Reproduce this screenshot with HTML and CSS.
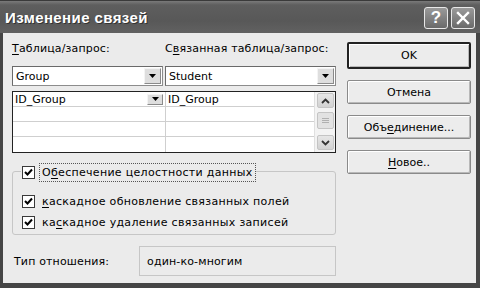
FILE: index.html
```html
<!DOCTYPE html>
<html lang="ru">
<head>
<meta charset="UTF-8">
<title>Изменение связей</title>
<link rel="stylesheet" href="styles.css">
</head>
<body>

<div class="window">
  <div class="titlebar">
    <span class="title">Изменение связей</span>
    <div class="caption-buttons">
      <span class="cap-btn">?</span>
      <span class="cap-btn">
        <svg width="14" height="14" viewBox="0 0 14 14"><path d="M2 2 L12 12 M12 2 L2 12" stroke="#fff" stroke-width="2.4" stroke-linecap="square"/></svg>
      </span>
    </div>
  </div>

  <div class="frame">
    <div class="dialog">
      <div class="main">
        <div class="labels">
          <span class="label-left"><u>Т</u>аблица/запрос:</span>
          <span>С<u>в</u>язанная таблица/запрос:</span>
        </div>

        <div class="combos">
          <div class="combo combo-left">
            <span class="combo-text">Group</span>
            <span class="drop-btn"><svg width="7" height="4" viewBox="0 0 7 4"><path d="M0 0 H7 L3.5 4 Z" fill="#000"/></svg></span>
          </div>
          <div class="combo combo-right">
            <span class="combo-text">Student</span>
            <span class="drop-btn"><svg width="7" height="4" viewBox="0 0 7 4"><path d="M0 0 H7 L3.5 4 Z" fill="#000"/></svg></span>
          </div>
        </div>

        <div class="grid">
          <div class="grid-rows">
            <div class="grid-row">
              <div class="cell cell-left">ID_Group
                <span class="cell-drop"><svg width="7" height="4" viewBox="0 0 7 4"><path d="M0 0 H7 L3.5 4 Z" fill="#000"/></svg></span>
              </div>
              <div class="cell">ID_Group</div>
            </div>
            <div class="grid-row"><div class="cell cell-left"></div><div class="cell"></div></div>
            <div class="grid-row"><div class="cell cell-left"></div><div class="cell"></div></div>
            <div class="grid-row"><div class="cell cell-left"></div><div class="cell"></div></div>
          </div>
          <div class="scrollbar">
            <span class="sb-btn">
              <svg width="9" height="6" viewBox="0 0 9 6"><path d="M1 5 L4.5 1.5 L8 5" fill="none" stroke="#333" stroke-width="1.8"/></svg>
            </span>
            <span class="sb-thumb">
              <svg width="7" height="6" viewBox="0 0 7 6"><path d="M0 0.5 H7 M0 2.5 H7 M0 4.5 H7" stroke="#b0b0b0" stroke-width="1"/></svg>
            </span>
            <span class="sb-btn sb-down">
              <svg width="9" height="6" viewBox="0 0 9 6"><path d="M1 1 L4.5 4.5 L8 1" fill="none" stroke="#333" stroke-width="1.8"/></svg>
            </span>
          </div>
        </div>

        <fieldset class="integrity">
          <legend class="integrity-legend">
            <span class="checkbox"><svg width="9" height="9" viewBox="0 0 9 9"><path d="M1 4 L3.5 6.5 L8 1.5" fill="none" stroke="#000" stroke-width="2"/></svg></span>
            <span class="focus-text">О<u>б</u>еспечение целостности данных</span>
          </legend>
          <div class="check-row">
            <span class="checkbox"><svg width="9" height="9" viewBox="0 0 9 9"><path d="M1 4 L3.5 6.5 L8 1.5" fill="none" stroke="#000" stroke-width="2"/></svg></span>
            <span><u>к</u>аскадное обновление связанных полей</span>
          </div>
          <div class="check-row">
            <span class="checkbox"><svg width="9" height="9" viewBox="0 0 9 9"><path d="M1 4 L3.5 6.5 L8 1.5" fill="none" stroke="#000" stroke-width="2"/></svg></span>
            <span>ка<u>с</u>кадное удаление связанных записей</span>
          </div>
        </fieldset>

        <div class="relation">
          <span class="relation-label">Тип отношения:</span>
          <span class="relation-value">один-ко-многим</span>
        </div>
      </div>

      <div class="actions">
        <button class="button button-default">OK</button>
        <button class="button">Отмена</button>
        <button class="button">Объ<u>е</u>динение...</button>
        <button class="button"><u>Н</u>овое..</button>
      </div>
    </div>
  </div>
</div>

</body>
</html>
```

FILE: styles.css
```css
body {
  margin: 0;
  font-family: "DejaVu Sans", Tahoma, sans-serif;
  font-size: 11px;
  color: #000;
  background: #444;
}

u {
  text-decoration-thickness: 1px;
  text-underline-offset: 2px;
}

.window {
  width: 480px;
  height: 288px;
  display: flex;
  flex-direction: column;
}

/* Заголовок окна */
.titlebar {
  height: 33px;
  flex-shrink: 0;
  display: flex;
  align-items: center;
  justify-content: space-between;
  padding: 0 5px 0 5px;
  box-sizing: border-box;
  background: linear-gradient(#7a7a7a 0px, #5e5e5e 4px, #585858 20px, #626262 33px);
  border-top: 1px solid #3a3a3a;
}

.title {
  font-family: "Liberation Sans", Arial, sans-serif;
  font-weight: bold;
  font-size: 15px;
  letter-spacing: 0.4px;
  color: #fff;
  text-shadow: 1px 1px 0 #333;
}

.caption-buttons {
  display: flex;
  gap: 3px;
  margin-top: 2px;
}

.cap-btn {
  width: 22px;
  height: 20px;
  border: 1px solid #e8e8e8;
  border-radius: 3px;
  background: linear-gradient(#9a9a9a, #6a6a6a);
  color: #fff;
  font-family: "Liberation Sans", Arial, sans-serif;
  font-weight: bold;
  font-size: 17px;
  display: flex;
  align-items: center;
  justify-content: center;
}

/* Рамка и тело диалога */
.frame {
  flex: 1;
  padding: 0 4px 5px 3px;
  background: #454545;
  display: flex;
}

.dialog {
  flex: 1;
  background: #ebebeb;
  display: flex;
  gap: 11px;
  padding: 8px 5px 0 9px;
}

.main {
  width: 324px;
  display: flex;
  flex-direction: column;
}

.labels {
  height: 15px;
  display: flex;
  align-items: center;
  letter-spacing: 0.15px;
}

.label-left {
  width: 153px;
}

.combos {
  margin-top: 10px;
  display: flex;
  gap: 2px;
}

.combo {
  height: 20px;
  box-sizing: border-box;
  background: #fff;
  border: 1px solid #8c8c8c;
  border-top-color: #6a6a6a;
  border-left-color: #6a6a6a;
  display: flex;
  align-items: center;
  padding: 0 1px 0 3px;
}

.combo-left {
  width: 151px;
}

.combo-right {
  width: 171px;
}

.combo-text {
  flex: 1;
}

.drop-btn {
  width: 17px;
  height: 16px;
  box-sizing: border-box;
  background: #dedede;
  border: 1px solid #f4f4f4;
  border-right-color: #8a8a8a;
  border-bottom-color: #8a8a8a;
  display: flex;
  align-items: center;
  justify-content: center;
}

/* Таблица полей */
.grid {
  margin-top: 5px;
  height: 62px;
  box-sizing: border-box;
  border: 1px solid #222;
  background: #fff;
  display: flex;
}

.grid-rows {
  flex: 1;
  display: flex;
  flex-direction: column;
}

.grid-row {
  height: 15px;
  display: flex;
  border-bottom: 1px solid #cfcfcf;
  box-sizing: border-box;
}

.grid-row:last-child {
  border-bottom: none;
}

.cell {
  flex: 1;
  display: flex;
  align-items: center;
  padding-left: 2px;
}

.cell-left {
  width: 148px;
  flex: none;
  border-right: 1px solid #cfcfcf;
  padding-right: 2px;
  justify-content: space-between;
}

.cell-drop {
  width: 16px;
  height: 11px;
  box-sizing: border-box;
  background: #dedede;
  border: 1px solid #f4f4f4;
  border-right-color: #8a8a8a;
  border-bottom-color: #8a8a8a;
  display: flex;
  align-items: center;
  justify-content: center;
}

.scrollbar {
  width: 20px;
  background: #f3f3f3;
  border-left: 1px solid #e0e0e0;
  display: flex;
  flex-direction: column;
  align-items: center;
  padding-top: 1px;
}

.sb-btn,
.sb-thumb {
  width: 17px;
  height: 15px;
  box-sizing: border-box;
  border: 1px solid #c4c4c4;
  border-radius: 2px;
  background: linear-gradient(#e6e6e6, #d2d2d2);
  display: flex;
  align-items: center;
  justify-content: center;
}

.sb-thumb {
  height: 17px;
  margin-top: 4px;
  background: #e2e2e2;
}

.sb-down {
  margin-top: auto;
  margin-bottom: 2px;
}

/* Обеспечение целостности */
.integrity {
  margin: 10px 0 0 0;
  padding: 0 0 0 9px;
  height: 72px;
  box-sizing: border-box;
  border: 1px solid #c6c6c6;
  border-radius: 3px;
  letter-spacing: 0.3px;
}

.integrity-legend {
  padding: 2px 2px 0 1px;
  margin-left: -1px;
  display: flex;
  align-items: center;
  gap: 6px;
}

.focus-text {
  outline: 1px dotted #555;
  outline-offset: 1px;
  padding: 1px 1px;
}

.checkbox {
  width: 13px;
  height: 13px;
  box-sizing: border-box;
  border: 1px solid #3a3a3a;
  background: #fff;
  display: flex;
  align-items: center;
  justify-content: center;
  flex-shrink: 0;
}

.check-row {
  height: 21px;
  display: flex;
  align-items: center;
  gap: 7px;
  margin-top: 11px;
}

.check-row + .check-row {
  margin-top: 0;
}

/* Тип отношения */
.relation {
  margin-top: 11px;
  height: 30px;
  display: flex;
  align-items: center;
  letter-spacing: 0.15px;
}

.relation-label {
  width: 125px;
  padding-left: 2px;
}

.relation-value {
  flex: 1;
  height: 30px;
  box-sizing: border-box;
  border: 1px solid #c6c6c6;
  display: flex;
  align-items: center;
  padding-left: 7px;
}

/* Кнопки */
.actions {
  width: 124px;
  display: flex;
  flex-direction: column;
  gap: 11px;
}

.button {
  height: 24px;
  font-family: inherit;
  font-size: 11px;
  color: #000;
  background: #ececec;
  border: 1px solid #8a8a8a;
  border-radius: 2px;
  box-shadow: inset 1px 1px 0 #fff, inset -1px -1px 0 #b8b8b8;
  padding: 0;
}

.button-default {
  height: 27px;
  margin-top: 1px;
  border: 2px solid #222;
}
```
